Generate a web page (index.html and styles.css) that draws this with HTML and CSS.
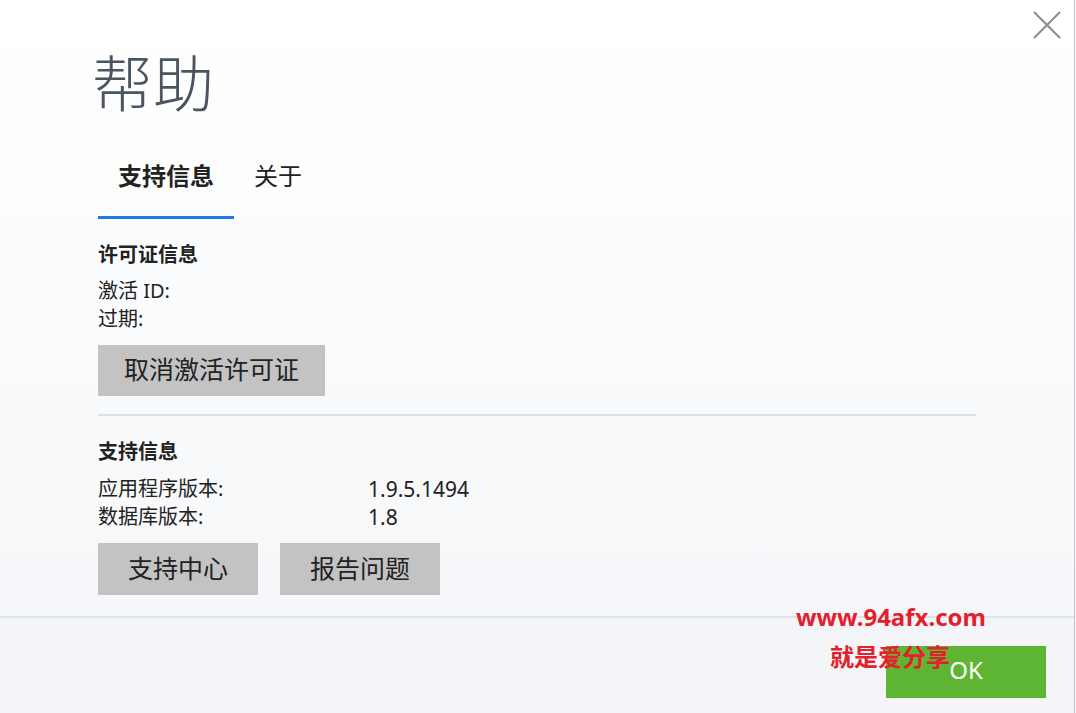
FILE: index.html
```html
<!DOCTYPE html>
<html lang="zh-CN">
<head>
    <meta charset="UTF-8">
    <meta name="viewport" content="width=device-width, initial-scale=1.0">
    <title>帮助</title>
    <link rel="stylesheet" href="styles.css">
</head>
<body>
    <div class="window">
        <button class="close" aria-label="关闭">
            <svg width="28" height="28" viewBox="0 0 28 28">
                <path d="M1 1 L27 27 M27 1 L1 27" stroke="#8c8c8c" stroke-width="2" fill="none"/>
            </svg>
        </button>

        <div class="main">
            <h1 class="title">帮助</h1>

            <div class="tabs">
                <div class="tab active">支持信息</div>
                <div class="tab">关于</div>
            </div>

            <div class="section">
                <h2 class="section-title">许可证信息</h2>
                <div class="rows">
                    <div class="row"><span>激活 ID:</span><span></span></div>
                    <div class="row"><span>过期:</span><span></span></div>
                </div>
                <div class="actions">
                    <button class="gray-button">取消激活许可证</button>
                </div>
            </div>

            <hr class="divider">

            <div class="section second">
                <h2 class="section-title">支持信息</h2>
                <div class="rows">
                    <div class="row"><span>应用程序版本:</span><span>1.9.5.1494</span></div>
                    <div class="row"><span>数据库版本:</span><span>1.8</span></div>
                </div>
                <div class="actions">
                    <button class="gray-button">支持中心</button>
                    <button class="gray-button">报告问题</button>
                </div>
            </div>
        </div>

        <div class="footer">
            <button class="ok-button">OK</button>
        </div>

        <div class="watermark">
            <div class="wm-url">www.94afx.com</div>
            <div class="wm-text">就是爱分享</div>
        </div>
    </div>
</body>
</html>
```

FILE: styles.css
```css
body {
    margin: 0;
    background: #f4f5f8;
    font-family: "Noto Sans", "Noto Sans CJK SC", sans-serif;
    color: #222;
}
.window {
    position: relative;
    width: 1074px;
    height: 713px;
    display: flex;
    flex-direction: column;
    border-right: 1px solid #c4c6c9;
    background: linear-gradient(#ffffff, #f4f6f9);
}
.close {
    position: absolute;
    top: 11px;
    right: 13px;
    padding: 0;
    border: none;
    background: none;
    cursor: pointer;
}
.main {
    flex: 1;
    padding: 0 98px 0 98px;
}
.title {
    margin: 44px 0 0 -6px;
    height: 80px;
    font-size: 61px;
    line-height: 80px;
    font-weight: 200;
    color: #4a5561;
}
.tabs {
    display: flex;
    margin-top: 26px;
}
.tab {
    padding: 10px 20px 24px;
    font-size: 24px;
    line-height: 32px;
    color: #222;
    border-bottom: 3px solid transparent;
}
.tab.active {
    font-weight: bold;
    border-bottom-color: #1f7ae3;
}
.section {
    margin-top: 22px;
}
.section-title {
    margin: 0 0 8px;
    font-size: 20px;
    line-height: 28px;
    font-weight: bold;
}
.second .section-title {
    margin-bottom: 9px;
}
.row {
    display: grid;
    grid-template-columns: 270px auto;
    font-size: 20px;
    line-height: 28px;
}
.row span:last-child {
    font-size: 21px;
}
.actions {
    display: flex;
    gap: 22px;
    margin-top: 12px;
}
.gray-button {
    min-width: 160px;
    height: 51px;
    padding: 0 26px 5px;
    border: none;
    background: #c3c3c3;
    font-family: inherit;
    font-size: 25px;
    color: #222;
    cursor: pointer;
}
.second .gray-button {
    height: 52px;
}
.divider {
    margin: 18px 0 0;
    border: none;
    height: 2px;
    background: #d8e1ec;
}
.footer {
    height: 97px;
    border-top: 2px solid #dce4ef;
    display: flex;
    justify-content: flex-end;
    align-items: flex-start;
    padding: 28px 28px 0 0;
    box-sizing: border-box;
    background: #f4f5f8;
}
.ok-button {
    width: 160px;
    height: 52px;
    padding: 0 0 6px;
    border: none;
    background: #5eb534;
    color: #fff;
    font-family: inherit;
    font-size: 24px;
    cursor: pointer;
}
.watermark {
    position: absolute;
    left: 796px;
    top: 600px;
    color: #e3202c;
    font-weight: bold;
    font-size: 24px;
    line-height: 34px;
}
.wm-text {
    margin: 6px 0 0 34px;
}
```
